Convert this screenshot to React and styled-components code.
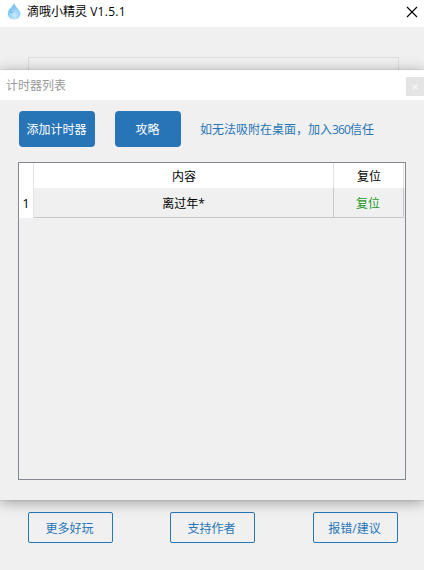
import React from 'react';
import styled, { createGlobalStyle } from 'styled-components';

const BLUE = '#2775b6';

const GlobalStyle = createGlobalStyle`
    * {
        box-sizing: border-box;
    }

    body {
        margin: 0;
        overflow: hidden;
        font-family: 'Open Sans', 'Noto Sans CJK SC', sans-serif;
        font-size: 12px;
        color: #000;
    }

    button {
        font: inherit;
        padding: 0;
        white-space: nowrap;
    }
`;

const Window = styled.div`
    position: relative;
    display: flex;
    flex-direction: column;
    width: 424px;
    height: 570px;
    background: #f0f0f0;
    overflow: hidden;
`;

const TitleBar = styled.header`
    display: flex;
    align-items: center;
    flex: none;
    height: 27px;
    padding: 0 6px 4px 7px;
    background: #fff;
`;

const AppTitle = styled.h1`
    flex: 1;
    margin: 0 0 0 6px;
    font-size: 12px;
    font-weight: normal;
    line-height: 23px;
`;

const Version = styled.span`
    letter-spacing: 0.3px;
`;

const IconButton = styled.button`
    display: flex;
    border: 0;
    background: none;
`;

const Content = styled.div`
    display: flex;
    flex: 1;
    flex-direction: column;
    padding: 30px 25px 27px 28px;
`;

const Frame = styled.div`
    flex: 1;
    margin-bottom: 24px;
    border: 1px solid #dcdcdc;
`;

const Footer = styled.footer`
    display: flex;
    flex: none;
    gap: 57px;
`;

const OutlineButton = styled.button`
    width: 85px;
    height: 31px;
    border: 1px solid ${BLUE};
    border-radius: 2px;
    background: transparent;
    color: ${BLUE};
    line-height: 29px;
    padding: 1px 2px 0 0;

    &:last-child {
        margin-left: 1px;
    }
`;

/* The timer list floats over the main window */
const Dialog = styled.section`
    position: absolute;
    top: 70px;
    left: 0;
    display: flex;
    flex-direction: column;
    width: 424px;
    height: 430px;
    background: #f0f0f0;
    box-shadow: 0 0 1px rgba(0, 0, 0, 0.25), 0 2px 13px rgba(0, 0, 0, 0.36);
`;

const DialogTitleBar = styled.div`
    display: flex;
    align-items: center;
    justify-content: space-between;
    height: 30px;
    padding-left: 6px;
    background: #fff;
    color: #999;
`;

const DialogClose = styled.button`
    display: flex;
    align-items: center;
    justify-content: center;
    width: 18px;
    height: 19px;
    margin-top: 3px;
    border: 0;
    background: #e4e4e4;
`;

const Toolbar = styled.div`
    display: flex;
    align-items: center;
    height: 36px;
    margin: 11px 19px 15px;
`;

const PrimaryButton = styled.button`
    width: ${({ $width }) => $width}px;
    height: 36px;
    margin-right: 20px;
    padding-right: 1px;
    border: 0;
    border-radius: 4px;
    background: ${BLUE};
    color: #fff;
`;

const Hint = styled.span`
    margin-left: -1px;
    color: ${BLUE};
    white-space: nowrap;
`;

const Narrow = styled.span`
    font-size: 12px;
    letter-spacing: -0.9px;
`;

const TableBox = styled.div`
    flex: 1;
    margin: 0 18px 20px;
    border: 1px solid #828790;
`;

const Row = styled.div`
    display: grid;
    grid-template-columns: 15px 300px 70px;
    height: ${({ $height }) => $height}px;
`;

const Cell = styled.div`
    display: flex;
    align-items: center;
    justify-content: center;
    border-right: 1px solid #e2e2e2;
`;

const HeaderCell = styled(Cell)`
    padding-left: 1px;
    background: #fff;
`;

/* the header strip also fills the gap before the table edge */
const HeaderRow = styled(Row)`
    background: #fff;
`;

const RowNumber = styled(Cell)`
    font-size: 13px;
    background: #fff;
`;

const DataCell = styled(Cell)`
    border-right-color: #c8c8c8;
    border-bottom: 1px solid #c8c8c8;
    padding-right: ${({ $color }) => ($color ? 1 : 0)}px;
    color: ${({ $color }) => $color || '#000'};
`;

const DropIcon = () => (
    <svg width="14" height="17" viewBox="0 0 14 17">
        <defs>
            <radialGradient id="drop" cx="55%" cy="75%" r="65%">
                <stop offset="0" stopColor="#c8ebff" />
                <stop offset="0.55" stopColor="#9ad5f9" />
                <stop offset="1" stopColor="#6dbcf0" />
            </radialGradient>
        </defs>
        <path
            d="M7.2.2C6 3.2.8 6 .8 10.8c0 3.4 2.8 5.7 6.3 5.7s6.3-2.3 6.3-5.7C13.4 7 8.3 4 7.2.2Z"
            fill="url(#drop)"
        />
        <path
            d="M3.3 7.2l1.2-.6M6.4 5.9l1.2.2M3 8.8c1.2.8 2.4.7 3.3-.2"
            stroke="#4a93c4"
            strokeWidth=".8"
            fill="none"
        />
    </svg>
);

const CloseIcon = () => (
    <svg width="12" height="12" viewBox="0 0 12 12">
        <path d="M1 1l10 10M11 1L1 11" stroke="#000" strokeWidth="1.1" />
    </svg>
);

const SmallCloseIcon = () => (
    <svg width="6" height="6" viewBox="0 0 6 6">
        <path d="M.7.7l4.6 4.6M5.3.7L.7 5.3" stroke="#f7f7f7" strokeWidth="1.3" />
    </svg>
);

const timers = [{ name: '离过年*' }];

const TimerTable = () => (
    <TableBox>
        <HeaderRow $height={25}>
            <HeaderCell />
            <HeaderCell>内容</HeaderCell>
            <HeaderCell>复位</HeaderCell>
        </HeaderRow>
        {timers.map(({ name }, i) => (
            <Row key={name} $height={30}>
                <RowNumber>{i + 1}</RowNumber>
                <DataCell>{name}</DataCell>
                <DataCell $color="#1f981f">复位</DataCell>
            </Row>
        ))}
    </TableBox>
);

export default function App() {
    return (
        <>
            <GlobalStyle />
            <Window>
                <TitleBar>
                    <DropIcon />
                    <AppTitle>滴哦小精灵 <Version>V1.5.1</Version></AppTitle>
                    <IconButton aria-label="关闭"><CloseIcon /></IconButton>
                </TitleBar>
                <Content>
                    <Frame />
                    <Footer>
                        <OutlineButton>更多好玩</OutlineButton>
                        <OutlineButton>支持作者</OutlineButton>
                        <OutlineButton>报错/建议</OutlineButton>
                    </Footer>
                </Content>
                <Dialog>
                    <DialogTitleBar>
                        计时器列表
                        <DialogClose aria-label="关闭"><SmallCloseIcon /></DialogClose>
                    </DialogTitleBar>
                    <Toolbar>
                        <PrimaryButton $width={76}>添加计时器</PrimaryButton>
                        <PrimaryButton $width={66}>攻略</PrimaryButton>
                        <Hint>如无法吸附在桌面，加入<Narrow>360</Narrow>信任</Hint>
                    </Toolbar>
                    <TimerTable />
                </Dialog>
            </Window>
        </>
    );
}
